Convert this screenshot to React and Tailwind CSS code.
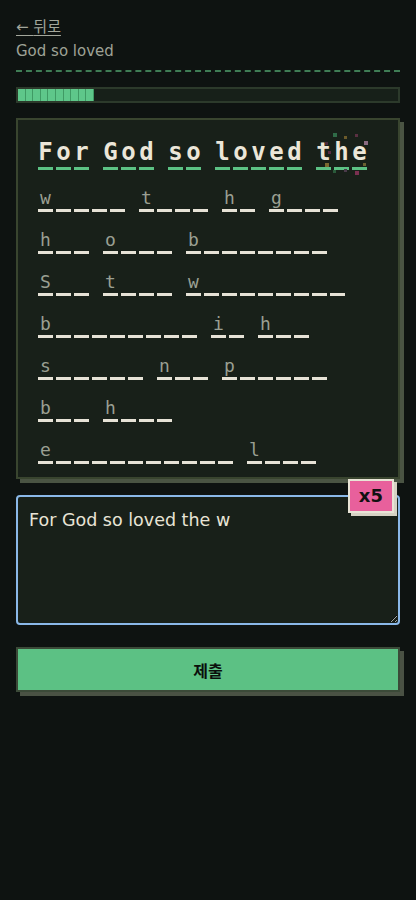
const TITLE = ['For', 'God', 'so', 'loved', 'the']
const REST = [
  'world', 'that', 'he', 'gave', 'his', 'only', 'begotten', 'Son', 'that',
  'whosoever', 'believeth', 'in', 'him', 'should', 'not', 'perish', 'but',
  'have', 'everlasting', 'life',
]

const SPARKS = [
  { x: 315, y: 13, s: 4, c: '#2f6b47' },
  { x: 326, y: 16, s: 3, c: '#6b5a2a' },
  { x: 337, y: 14, s: 3, c: '#5a3042' },
  { x: 346, y: 21, s: 4, c: '#8a6a80' },
  { x: 307, y: 22, s: 3, c: '#4a2a3a' },
  { x: 310, y: 31, s: 3, c: '#5a2a40' },
  { x: 307, y: 43, s: 4, c: '#7a6a30' },
  { x: 345, y: 43, s: 3, c: '#6a6030' },
  { x: 315, y: 50, s: 3, c: '#2a5a3a' },
  { x: 326, y: 49, s: 3, c: '#4a3a4a' },
  { x: 337, y: 51, s: 4, c: '#7a3050' },
]

const MONO = { fontFamily: '"DejaVu Sans Mono", "Liberation Mono", monospace' }

function SolvedWord({ word }) {
  return (
    <div className="flex gap-[3px]">
      {word.split('').map((ch, i) => (
        <div key={i} className="flex w-[15px] flex-col items-center">
          <div className="h-[28px] text-[24px] font-bold leading-[28px] text-[#ebe6d8]">{ch}</div>
          <div className="mt-[1px] h-[3px] w-[15px] bg-[#5cc184]" />
        </div>
      ))}
    </div>
  )
}

function HintWord({ word }) {
  return (
    <div className="flex gap-[3px]">
      {word.split('').map((ch, i) => (
        <div key={i} className="flex w-[15px] flex-col items-center">
          <div className="h-[22px] text-[18px] leading-[22px] text-[#9a9f92]">{i === 0 ? ch : ''}</div>
          <div className="h-[3px] w-[15px] bg-[#e6e2d6]" />
        </div>
      ))}
    </div>
  )
}

export default function App() {
  return (
    <div
      className="min-h-screen bg-[#0e1311] px-4 pt-[15px]"
      style={{ fontFamily: '"DejaVu Sans", "Noto Sans CJK KR", sans-serif' }}
    >
      <a href="#" className="text-[15px] leading-[20px] text-[#a3a79c] underline underline-offset-[3px]">
        ← <span style={{ fontFamily: '"Noto Sans CJK KR", sans-serif' }}>뒤로</span>
      </a>
      <div className="mt-[2px] text-[15px] leading-[20px] text-[#9ea296]">God so loved</div>
      <div className="mt-[9px] border-t-2 border-dashed border-[#3f7d55]" />

      <div className="mt-[15px] flex h-[16px] border-2 border-[#2c3a2b] bg-[#172019]">
        <div className="flex w-[20%]">
          {Array.from({ length: 10 }).map((_, i) => (
            <div key={i} className="flex-1 border-r border-[#3f9a64] bg-[#5ec78a]" />
          ))}
        </div>
      </div>

      <div className="relative mt-[15px] border-2 border-[#39452f] bg-[#182019] px-[20px] pb-[13px] pt-[18px] shadow-[4px_4px_0_#4a5443]">
        <div className="flex flex-wrap items-end gap-x-[14px] gap-y-[17px]" style={MONO}>
          {TITLE.map((w, i) => (
            <SolvedWord key={'t' + i} word={w} />
          ))}
          {REST.map((w, i) => (
            <HintWord key={'r' + i} word={w} />
          ))}
        </div>
        {SPARKS.map((p, i) => (
          <span
            key={i}
            className="absolute"
            style={{ left: p.x, top: p.y, width: p.s, height: p.s, background: p.c }}
          />
        ))}
      </div>

      <div className="relative mt-[16px]">
        <textarea
          defaultValue="For God so loved the w"
          className="block h-[130px] w-full rounded-[4px] border-2 border-[#8ab8e8] bg-[#182019] px-[11px] pt-[12px] text-[17.5px] leading-[22px] text-[#e8e4d6] outline-none"
        />
        <div className="absolute right-[6px] top-[-16px] border-2 border-[#e8e4d6] bg-[#e8609c] px-[9px] py-[3px] text-[18px] font-bold leading-[24px] text-[#111] shadow-[3px_3px_0_#d6d2c4]">
          x5
        </div>
      </div>

      <button className="mt-[22px] flex h-[45px] w-full items-center justify-center border-2 border-[#3b4a38] bg-[#5cc184] text-[16px] font-bold text-[#0b0f0c] shadow-[4px_4px_0_#4a5244]">
        <span style={{ fontFamily: '"Noto Sans CJK KR", sans-serif' }}>제출</span>
      </button>
    </div>
  )
}
